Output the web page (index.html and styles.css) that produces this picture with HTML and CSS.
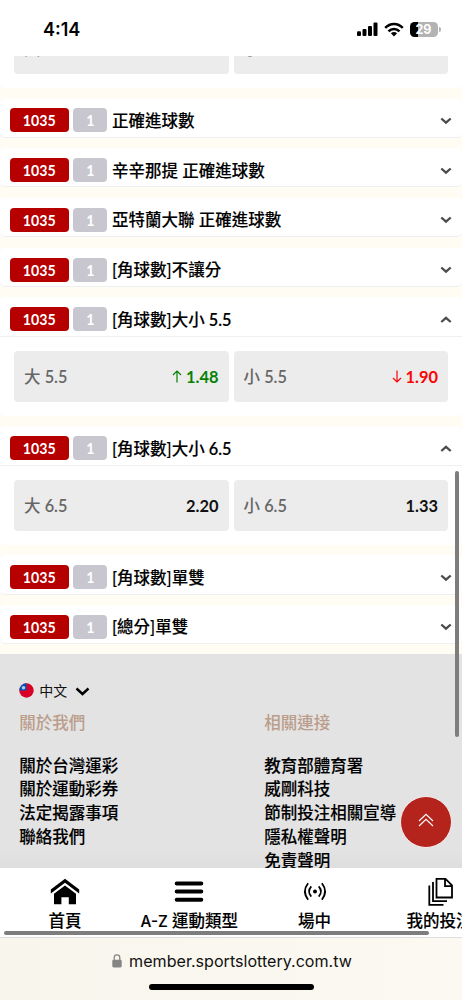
FILE: index.html
```
<!DOCTYPE html>
<html lang="zh-Hant">
<head>
<meta charset="utf-8">
<meta name="viewport" content="width=device-width, initial-scale=1">
<title>運動彩券</title>
<link rel="stylesheet" href="styles.css">
</head>
<body>
<div class="screen">
  <header class="status">
    <span class="time">4:14</span>
    <div class="status-icons">
      <svg class="signal" viewBox="0 0 21 14" width="21" height="14"><rect x="0" y="9.3" width="4" height="4.7" rx="1.1"/><rect x="5.5" y="7" width="4" height="7" rx="1.1"/><rect x="11" y="4" width="4" height="10" rx="1.1"/><rect x="16.5" y="0.5" width="4" height="13.5" rx="1.1"/></svg>
      <svg class="wifi" viewBox="0 0 20 15" width="20" height="15"><g fill="none" stroke="#000" stroke-width="2.5"><path d="M1.2 5.8C6.2 .6 13.8 .6 18.8 5.8"/><path d="M4.5 9.4C7.6 6.2 12.4 6.2 15.5 9.4"/></g><path d="M6.9 11.2Q10 8.7 13.1 11.2L10 14.5Z"/></svg>
      <div class="battery"><span>29</span></div>
      <i class="battery-cap"></i>
    </div>
  </header>

  <main class="content">
    <div class="market-list">
      <section class="market clipped">
        <div class="odds"><div class="odd"><span>大</span></div><div class="odd"><span>小</span></div></div>
      </section>
      <section class="market"><div class="head"><b class="code">1035</b><b class="count">1</b><span class="title">正確進球數</span><svg class="chev" viewBox="0 0 12 8"><path d="M1.3 1.5 6 5.7 10.7 1.5"/></svg></div></section>
      <section class="market"><div class="head"><b class="code">1035</b><b class="count">1</b><span class="title">辛辛那提 正確進球數</span><svg class="chev" viewBox="0 0 12 8"><path d="M1.3 1.5 6 5.7 10.7 1.5"/></svg></div></section>
      <section class="market"><div class="head"><b class="code">1035</b><b class="count">1</b><span class="title">亞特蘭大聯 正確進球數</span><svg class="chev" viewBox="0 0 12 8"><path d="M1.3 1.5 6 5.7 10.7 1.5"/></svg></div></section>
      <section class="market"><div class="head"><b class="code">1035</b><b class="count">1</b><span class="title">[角球數]不讓分</span><svg class="chev" viewBox="0 0 12 8"><path d="M1.3 1.5 6 5.7 10.7 1.5"/></svg></div></section>
      <section class="market open">
        <div class="head"><b class="code">1035</b><b class="count">1</b><span class="title">[角球數]大小 <em>5.5</em></span><svg class="chev" viewBox="0 0 12 8"><path d="M1.3 6 6 1.8 10.7 6"/></svg></div>
        <div class="odds">
          <div class="odd"><span>大 <em>5.5</em></span><b class="up"><svg viewBox="0 0 10 13"><path d="M5 12.5V1M1 5 5 1 9 5"/></svg>1.48</b></div>
          <div class="odd"><span>小 <em>5.5</em></span><b class="down"><svg viewBox="0 0 10 13"><path d="M5 .5V12M1 8 5 12 9 8"/></svg>1.90</b></div>
        </div>
      </section>
      <section class="market open">
        <div class="head"><b class="code">1035</b><b class="count">1</b><span class="title">[角球數]大小 <em>6.5</em></span><svg class="chev" viewBox="0 0 12 8"><path d="M1.3 6 6 1.8 10.7 6"/></svg></div>
        <div class="odds">
          <div class="odd"><span>大 <em>6.5</em></span><b>2.20</b></div>
          <div class="odd"><span>小 <em>6.5</em></span><b>1.33</b></div>
        </div>
      </section>
      <section class="market"><div class="head"><b class="code">1035</b><b class="count">1</b><span class="title">[角球數]單雙</span><svg class="chev" viewBox="0 0 12 8"><path d="M1.3 1.5 6 5.7 10.7 1.5"/></svg></div></section>
      <section class="market"><div class="head"><b class="code">1035</b><b class="count">1</b><span class="title">[總分]單雙</span><svg class="chev" viewBox="0 0 12 8"><path d="M1.3 1.5 6 5.7 10.7 1.5"/></svg></div></section>
    </div>

    <footer class="footer">
      <div class="lang">
        <svg class="flag" viewBox="0 0 15 15" width="15" height="15"><circle cx="7.5" cy="7.5" r="7.2" fill="#d80027"/><path d="M.3 7.5A7.2 7.2 0 0 1 7.5.3V7.5Z" fill="#0052b4"/><circle cx="4.5" cy="4.7" r="1.8" fill="#dce8f8" opacity=".8"/></svg>
        <span>中文</span>
        <svg class="lang-chev" viewBox="0 0 15 9" width="15" height="9"><path d="M1.5 1.5 7.5 7 13.5 1.5"/></svg>
      </div>
      <div class="links">
        <div class="col"><h3>關於我們</h3><a>關於台灣運彩</a><a>關於運動彩券</a><a>法定揭露事項</a><a>聯絡我們</a></div>
        <div class="col"><h3>相關連接</h3><a>教育部體育署</a><a>威剛科技</a><a>節制投注相關宣導</a><a>隱私權聲明</a><a>免責聲明</a></div>
      </div>
    </footer>
    <div class="to-top"><svg viewBox="0 0 16 14" width="16" height="14"><path d="M1 8 8 1.3 15 8M1 13 8 6.3 15 13"/></svg></div>
  </main>

  <nav class="tabs">
    <div class="tab">
      <svg viewBox="0 0 30 28" width="30" height="28"><path d="M.8 11.5 15 .7 29.2 11.5V15.4L15 4.7.8 15.4Z"/><path d="M4 15.8 15 7.6 26 15.8V26.3H18.8V19.2H11.4V26.3H4Z"/></svg>
      <span>首頁</span>
    </div>
    <div class="tab">
      <svg viewBox="0 0 30 28" width="30" height="28"><path d="M2.7 5.5H27.3M2.7 13.5H27.3M2.7 21.7H27.3" stroke="#000" stroke-width="4" stroke-linecap="round"/></svg>
      <span><em class="az">A-Z</em> 運動類型</span>
    </div>
    <div class="tab">
      <svg viewBox="0 0 30 28" width="30" height="28"><circle cx="15" cy="13.5" r="2"/><g fill="none" stroke="#000" stroke-width="1.8"><path d="M8.1 5.3Q1.7 13.5 8.1 21.7M21.9 5.3Q28.3 13.5 21.9 21.7M11.3 8.4Q6.8 13.5 11.3 18.6M18.7 8.4Q23.2 13.5 18.7 18.6"/></g></svg>
      <span>場中</span>
    </div>
    <div class="tab">
      <svg viewBox="0 0 30 28" width="30" height="28"><g fill="none" stroke="#000" stroke-width="1.8"><path d="M11.5 .9H20.5L27 7.4V19.5H11.5ZM20 1.3V8.2H26.6"/><path d="M8 4V23.2H22M4.3 7.5V26.8H18.5"/></g></svg>
      <span>我的投注</span>
    </div>
    <i class="scroll-x"></i>
  </nav>

  <div class="browser">
    <div class="url">
      <svg viewBox="0 0 10 14" width="10" height="14"><rect x=".3" y="5.7" width="9.4" height="7.7" rx="1.3" fill="#858585"/><path d="M2.2 6V3.7a2.8 2.8 0 0 1 5.6 0V6" fill="none" stroke="#858585" stroke-width="1.3"/></svg>
      <span>member.sportslottery.com.tw</span>
    </div>
    <i class="home-bar"></i>
  </div>
  <i class="scroll-y"></i>
</div>
</body>
</html>
```
FILE: styles.css
```
* { box-sizing: border-box; }
body { margin: 0; }
.screen {
  position: relative;
  width: 462px;
  height: 1000px;
  overflow: hidden;
  display: flex;
  flex-direction: column;
  background: #fff;
  font-family: Lato, "Noto Sans CJK TC", sans-serif;
  font-size: 16.5px;
  color: #111;
}
em { font-style: normal; line-height: 0; }

.status { height: 56px; flex: none; display: flex; justify-content: space-between; padding: 21px 21.5px 0 43px; }
.time { font: 600 18px/18px Inter, sans-serif; color: #000; }
.status-icons { display: flex; align-items: flex-start; }
.signal { margin-top: 1px; }
.wifi { margin: 1px 0 0 6px; }
.battery {
  width: 28px; height: 15px; margin: 1px 0 0 5.5px; border-radius: 4.5px;
  background: linear-gradient(90deg, #000 8px, #b3b3b3 8px);
  color: #fff; font: 700 12.5px/15px Inter, sans-serif; text-align: center;
}
.battery-cap { width: 2px; height: 5px; margin: 6px 0 0 1px; background: #b3b3b3; border-radius: 0 2px 2px 0; }

.content { position: relative; flex: none; height: 812px; overflow: hidden; }
.market-list { height: 598px; display: flex; flex-direction: column; gap: 10.55px; background: #fffcf3; }
.market { flex: none; height: 39.2px; background: #fff; border-radius: 5px; }
.market.open { height: 118.4px; }
.market.clipped { height: 79.2px; margin-top: -47.2px; }
.head {
  display: flex; align-items: center; height: 39.2px;
  padding: 5.6px 10.5px 0 9.5px;
  border-bottom: 1px solid #eeeef3;
  border-radius: 5px;
}
.open .head { border-radius: 0; }
.code, .count {
  height: 24px; border-radius: 4px; color: #fff;
  font-size: 14.2px; line-height: 25px; text-align: center;
}
.code { width: 59.5px; background: #b60000; }
.count { width: 34px; margin-left: 4.3px; background: #c8c7cf; }
.title { flex: 1; margin: 1px 0 0 4.7px; font-weight: 500; line-height: 24px; white-space: nowrap; color: #000; -webkit-text-stroke: .12px #000; }
.title em { font-size: 16.3px; font-weight: 600; vertical-align: .5px; }
.chev { width: 12px; height: 8px; margin-top: 1px; fill: none; stroke: #4c4c4c; stroke-width: 2.3; }

.odds { display: flex; gap: 5px; padding: 14.7px 14px 0; }
.odd {
  flex: 1; height: 50.6px; display: flex; align-items: center; justify-content: space-between;
  padding: 0 10px; border-radius: 4px; background: #ececec; color: #666; font-weight: 500;
}
.odd span { line-height: 24px; padding-top: 1px; }
.odd em { font-size: 16.3px; font-weight: 600; vertical-align: .5px; }
.odd b { display: flex; align-items: center; color: #111; font-size: 16.4px; }
.odd b svg { width: 10px; height: 13px; margin-right: 4px; fill: none; stroke: currentColor; stroke-width: 1.2; }
.odd .up { color: #058205; }
.odd .down { color: #fa0505; }

.footer { height: 214px; padding: 26px 19.3px 0; background: linear-gradient(#e3e3e3 195px, #dedede); }
.lang { display: flex; align-items: center; height: 20px; font-size: 14px; }
.flag { margin-left: -.5px; }
.lang span { margin: 0 8px 0 5.5px; }
.lang-chev { margin-top: 2px; fill: none; stroke: #000; stroke-width: 2.4; }
.links { display: grid; grid-template-columns: 245px 1fr; margin-top: 12px; }
.col { display: flex; flex-direction: column; }
.col h3 { margin: 0 0 19px; font-size: 16.5px; line-height: 23.7px; font-weight: 500; color: #ba9d8b; }
.col a { line-height: 23.7px; font-weight: 500; color: #000; white-space: nowrap; -webkit-text-stroke: .12px #000; }
.to-top {
  position: absolute; left: 400px; top: 739.5px; width: 52px; height: 52px;
  display: flex; align-items: center; justify-content: center;
  border: 1px solid #f7eeee; border-radius: 50%; background: #b5241c;
}
.to-top svg { margin-top: -4px; fill: none; stroke: #fff; stroke-width: 1.1; }

.tabs {
  position: relative; flex: none; height: 70px; overflow: hidden;
  display: grid; grid-template-columns: 124px 124.5px 126px 124px;
  padding-left: 3px; background: #fff; border-bottom: 1px solid #dedede;
}
.tab { display: flex; flex-direction: column; align-items: center; padding-top: 10px; font-weight: 500; color: #000; white-space: nowrap; }
.tab svg { height: 28px; flex: none; }
.tab span { line-height: 24px; margin-top: 3px; -webkit-text-stroke: .12px #000; }
.az { font-family: Inter, sans-serif; font-size: 15.3px; font-weight: 500; }
.scroll-x { position: absolute; left: 4px; bottom: 2px; width: 425px; height: 4px; border-radius: 2px; background: #7d7d7d; }
.scroll-y { position: absolute; left: 455px; top: 471px; width: 4px; height: 266px; border-radius: 2px; background: #7d7d7d; }

.browser {
  flex: none; height: 62px; display: flex; flex-direction: column; align-items: center;
  background: linear-gradient(90deg, #f8f5ed, #fcf9f2);
}
.url { display: flex; align-items: center; gap: 7px; height: 22px; margin: 12px 0 12px 2px; font: 400 16.1px/22px Inter, sans-serif; color: #111; }
.home-bar { width: 165px; height: 6px; border-radius: 3px; background: #000; }
```
